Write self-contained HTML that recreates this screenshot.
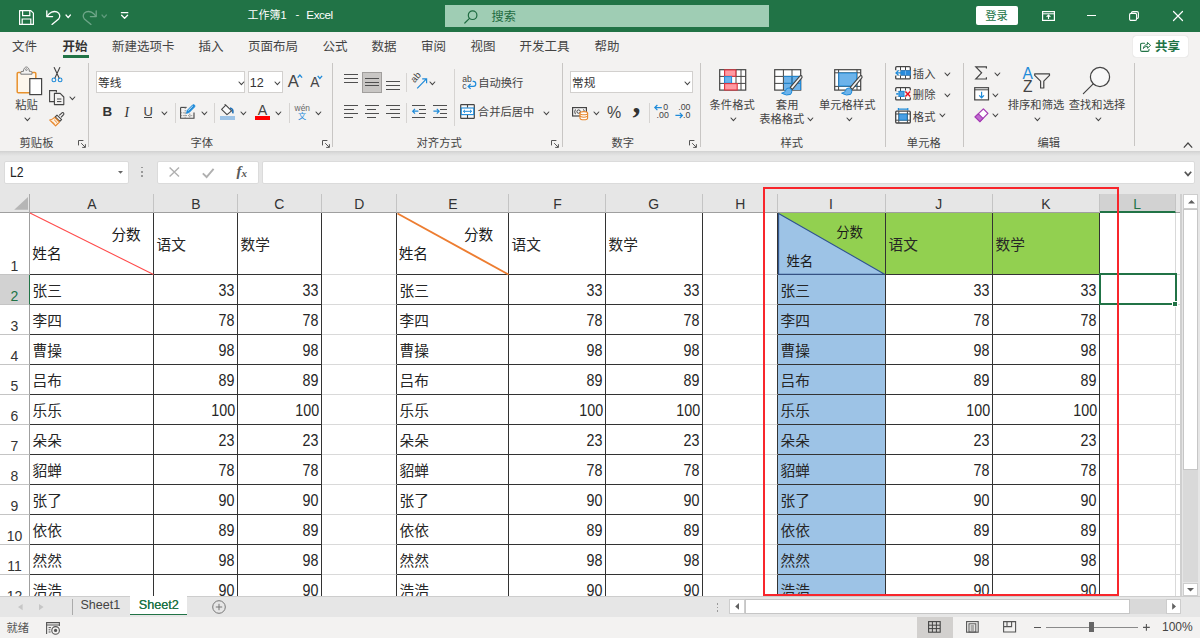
<!DOCTYPE html>
<html lang="zh-CN"><head><meta charset="utf-8"><title>工作簿1 - Excel</title>
<style>
html,body{margin:0;padding:0;background:#e6e6e6;}
#app{position:relative;width:1200px;height:638px;overflow:hidden;background:#e6e6e6;font-family:'Liberation Sans','Noto Sans CJK SC',sans-serif;}
.t{position:absolute;white-space:pre;line-height:1;}
.i{position:absolute;overflow:visible;}
.b{position:absolute;box-sizing:border-box;}
.sec{position:absolute;left:0;width:1200px;}
.cell{position:absolute;box-sizing:border-box;font-size:14.67px;color:#262626;white-space:pre;overflow:hidden;display:flex;align-items:center;}
.num{justify-content:flex-end;font-size:15.7px;}
.n{display:inline-block;transform:scaleX(.91);transform-origin:100% 50%;}
.hdr{position:absolute;box-sizing:border-box;font-size:14.67px;color:#333;text-align:center;}
</style></head>
<body><div id="app">
<div id="titlebar" class="sec" style="top:0;height:32px;background:#217346;"><svg class="i" style="left:19.00px;top:9.50px;" width="15" height="15" viewBox="0 0 15 15"><path d="M0.6 0.6 H11.8 L14.4 3.2 V14.4 H0.6 Z" fill="none" stroke="#fff" stroke-width="1.2" stroke-linejoin="round"/><path d="M3.6 0.8 V5.6 H10.8 V0.8" fill="none" stroke="#fff" stroke-width="1.2"/><path d="M3.2 14.2 V9 H11.8 V14.2" fill="none" stroke="#fff" stroke-width="1.2"/></svg><svg class="i" style="left:45.50px;top:9.50px;" width="15" height="15" viewBox="0 0 15 15"><path d="M0.8 0.8 V6.6 H6.6" fill="none" stroke="#fff" stroke-width="1.3" stroke-linecap="round" stroke-linejoin="round"/><path d="M1.2 6.2 C3.5 2.6 7.5 0.6 10.8 1.9 C14 3.2 14.7 6.6 12.6 9 L6 14.4" fill="none" stroke="#fff" stroke-width="1.3" stroke-linecap="round"/></svg><svg class="i" style="left:65.30px;top:14.20px" width="6.40" height="4.70" viewBox="-1 -1 6.40 4.70"><path d="M0 0 L2.20 2.70 L4.40 0" fill="none" stroke="#fff" stroke-width="1.25" stroke-linecap="round" stroke-linejoin="round"/></svg><svg class="i" style="left:81.50px;top:9.50px;" width="15" height="15" viewBox="0 0 15 15"><path d="M14.2 0.8 V6.6 H8.4" fill="none" stroke="#6fa689" stroke-width="1.3" stroke-linecap="round" stroke-linejoin="round"/><path d="M13.8 6.2 C11.5 2.6 7.5 0.6 4.2 1.9 C1 3.2 0.3 6.6 2.4 9 L9 14.4" fill="none" stroke="#6fa689" stroke-width="1.3" stroke-linecap="round"/></svg><svg class="i" style="left:100.70px;top:14.20px" width="6.40" height="4.70" viewBox="-1 -1 6.40 4.70"><path d="M0 0 L2.20 2.70 L4.40 0" fill="none" stroke="#5d9a7b" stroke-width="1.25" stroke-linecap="round" stroke-linejoin="round"/></svg><svg class="i" style="left:120.50px;top:12.40px;" width="7.2" height="7" viewBox="0 0 7.2 7"><path d="M0.4 0.7 H6.8" stroke="#fff" stroke-width="1.3" stroke-linecap="round"/><path d="M0.6 3.2 L3.6 6.2 L6.6 3.2" fill="none" stroke="#fff" stroke-width="1.3" stroke-linecap="round" stroke-linejoin="round"/></svg><span class="t " style="left:247.56px;top:10.29px;font-size:11px;color:#fff;font-weight:400;">工作簿1</span><span class="t " style="left:295.60px;top:9.47px;font-size:11.5px;color:#fff;font-weight:400;">-</span><span class="t " style="left:306.30px;top:9.30px;font-size:11.7px;color:#fff;font-weight:400;letter-spacing:-0.45px;">Excel</span><div class="b " style="left:445.30px;top:4.80px;width:324.00px;height:22.20px;background:#9fcdb4;"><svg class="i" style="left:18.50px;top:5.00px;" width="14" height="14" viewBox="0 0 14 14"><circle cx="8.6" cy="5.2" r="4.3" fill="none" stroke="#1e6b41" stroke-width="1.2"/><path d="M5.5 8.3 L0.8 13" stroke="#1e6b41" stroke-width="1.2" stroke-linecap="round"/></svg><span class="t " style="left:46.31px;top:5.85px;font-size:12.2px;color:#1e6b41;font-weight:400;">搜索</span></div><div class="b " style="left:975.50px;top:6.30px;width:42.00px;height:18.80px;background:#fff;border-radius:2px;"><span class="t " style="left:9.75px;top:4.35px;font-size:11.3px;color:#217346;font-weight:400;">登录</span></div><svg class="i" style="left:1041.50px;top:11.00px;" width="13" height="10" viewBox="0 0 13 10"><rect x="0.6" y="0.6" width="11.8" height="8.8" fill="none" stroke="#fff" stroke-width="1.2"/><path d="M0.6 2.8 H12.4" stroke="#fff" stroke-width="1"/><path d="M6.5 8 V4.2 M4.6 5.9 L6.5 4 L8.4 5.9" fill="none" stroke="#fff" stroke-width="1.1"/></svg><div class="b " style="left:1087.00px;top:15.00px;width:9.00px;height:1.30px;background:#fff;"></div><svg class="i" style="left:1129.00px;top:11.00px;" width="10" height="10" viewBox="0 0 10 10"><rect x="0.6" y="2.4" width="7" height="7" rx="1.4" fill="none" stroke="#fff" stroke-width="1.1"/><path d="M2.6 2.2 V1.8 Q2.6 0.6 3.8 0.6 H8 Q9.4 0.6 9.4 2 V6.2 Q9.4 7.4 8.2 7.4 H7.8" fill="none" stroke="#fff" stroke-width="1.1"/></svg><svg class="i" style="left:1172.50px;top:11.00px;" width="10" height="10" viewBox="0 0 10 10"><path d="M0.5 0.5 L9.5 9.5 M9.5 0.5 L0.5 9.5" stroke="#fff" stroke-width="1.2" stroke-linecap="round"/></svg></div><div id="tabs" class="sec" style="top:32px;height:28px;background:#f3f2f1;"><span class="t " style="left:12.00px;top:9.02px;font-size:12.5px;color:#444;font-weight:400;">文件</span><span class="t " style="left:62.50px;top:9.02px;font-size:12.5px;color:#333;font-weight:700;">开始</span><div class="b " style="left:63.00px;top:23.00px;width:25.60px;height:3.00px;background:#217346;"></div><span class="t " style="left:112.00px;top:9.02px;font-size:12.5px;color:#444;font-weight:400;">新建选项卡</span><span class="t " style="left:198.50px;top:9.02px;font-size:12.5px;color:#444;font-weight:400;">插入</span><span class="t " style="left:248.00px;top:9.02px;font-size:12.5px;color:#444;font-weight:400;">页面布局</span><span class="t " style="left:322.50px;top:9.02px;font-size:12.5px;color:#444;font-weight:400;">公式</span><span class="t " style="left:371.50px;top:9.02px;font-size:12.5px;color:#444;font-weight:400;">数据</span><span class="t " style="left:421.00px;top:9.02px;font-size:12.5px;color:#444;font-weight:400;">审阅</span><span class="t " style="left:470.50px;top:9.02px;font-size:12.5px;color:#444;font-weight:400;">视图</span><span class="t " style="left:519.50px;top:9.02px;font-size:12.5px;color:#444;font-weight:400;">开发工具</span><span class="t " style="left:594.50px;top:9.02px;font-size:12.5px;color:#444;font-weight:400;">帮助</span><div class="b " style="left:1133.20px;top:3.50px;width:55.00px;height:21.00px;background:#fff;border-radius:3px;box-shadow:0 0 1px rgba(0,0,0,.25);"><svg class="i" style="left:7.00px;top:5.20px;" width="11" height="11" viewBox="0 0 11 11"><path d="M4.6 2.2 H2 Q0.6 2.2 0.6 3.6 V9 Q0.6 10.4 2 10.4 H7.6 Q9 10.4 9 9 V8.2" fill="none" stroke="#217346" stroke-width="1.1" stroke-linecap="round"/><path d="M3.4 7.6 C3.6 5 5.2 3.6 7.4 3.6 V1.4 L10.6 4.4 L7.4 7.2 V5.4 C5.6 5.4 4.4 6 3.4 7.6 Z" fill="none" stroke="#217346" stroke-width="1" stroke-linejoin="round"/></svg><span class="t " style="left:21.80px;top:5.02px;font-size:12.5px;color:#217346;font-weight:700;">共享</span></div></div><div id="ribbon" class="sec" style="top:60px;height:91px;background:#f3f2f1;"><svg class="i" style="left:15.50px;top:6.00px;" width="28" height="30" viewBox="0 0 28 30"><rect x="1.2" y="6.4" width="18.6" height="20.4" rx="1" fill="#fdf6ec" stroke="#e8912d" stroke-width="1.5"/><path d="M4.8 8.2 V6.6 Q4.8 5.4 6 5.4 H7.4 C7.4 2.8 9 1 10.4 1 C11.8 1 13.4 2.8 13.4 5.4 H14.8 Q16 5.4 16 6.6 V8.2 Z" fill="#f3f2f1" stroke="#7a7a7a" stroke-width="1"/><circle cx="10.4" cy="3.6" r="0.9" fill="none" stroke="#7a7a7a" stroke-width="0.8"/><rect x="13.8" y="12.6" width="11.8" height="16" fill="#fff" stroke="#444" stroke-width="1.2"/></svg><span class="t " style="left:15.15px;top:39.95px;font-size:11.3px;color:#444;font-weight:400;">粘贴</span><svg class="i" style="left:24.30px;top:56.70px" width="6.80" height="4.70" viewBox="-1 -1 6.80 4.70"><path d="M0 0 L2.40 2.70 L4.80 0" fill="none" stroke="#444" stroke-width="1.1" stroke-linecap="round" stroke-linejoin="round"/></svg><svg class="i" style="left:50.50px;top:7.00px;" width="12" height="16" viewBox="0 0 12 16"><path d="M3.2 0.6 L8.2 11.2 M8.8 0.6 L3.8 11.2" fill="none" stroke="#444" stroke-width="1.1" stroke-linecap="round"/><circle cx="2.9" cy="12.9" r="1.9" fill="none" stroke="#1f8bd9" stroke-width="1.1"/><circle cx="9.1" cy="12.9" r="1.9" fill="none" stroke="#1f8bd9" stroke-width="1.1"/></svg><svg class="i" style="left:48.80px;top:29.80px;" width="16" height="16" viewBox="0 0 16 16"><path d="M5 11.6 H0.6 V0.6 H7.4 V2.4" fill="none" stroke="#444" stroke-width="1.1"/><path d="M5.4 3.4 H11.2 L14.8 7 V14.6 H5.4 Z" fill="#f3f2f1" stroke="#444" stroke-width="1.1" stroke-linejoin="round"/><path d="M8 9 H12.4 M8 11.6 H12.4" stroke="#444" stroke-width="1"/></svg><svg class="i" style="left:69.30px;top:36.20px" width="6.80" height="4.70" viewBox="-1 -1 6.80 4.70"><path d="M0 0 L2.40 2.70 L4.80 0" fill="none" stroke="#444" stroke-width="1.1" stroke-linecap="round" stroke-linejoin="round"/></svg><svg class="i" style="left:48.80px;top:51.60px;" width="16" height="15" viewBox="0 0 16 15"><path d="M10.2 3.4 L13 0.8 Q13.8 0.2 14.6 1 Q15.2 1.8 14.6 2.6 L12 5.4" fill="none" stroke="#444" stroke-width="1.1"/><path d="M8 3.2 L12.6 7.6 L10.8 9.4 L6.2 5 Z" fill="#f3f2f1" stroke="#444" stroke-width="1.1" stroke-linejoin="round"/><path d="M5.6 5.4 L10.4 10 L6.6 13.8 L0.8 8 Q3.4 7.6 5.6 5.4 Z" fill="#fdf0e0" stroke="#e8872b" stroke-width="1.2" stroke-linejoin="round"/><path d="M3.2 9.8 L5.2 11.8 M5.2 7.8 L8 10.6" stroke="#e8872b" stroke-width="1"/></svg><span class="t " style="left:19.55px;top:78.25px;font-size:11.3px;color:#444;font-weight:400;">剪贴板</span><svg class="i" style="left:77.50px;top:79.50px;" width="8" height="8" viewBox="0 0 8 8"><path d="M0.5 5.4 V0.5 H5.4" fill="none" stroke="#555" stroke-width="1"/><path d="M3.2 3.2 L7.2 7.2 M7.4 4.2 V7.4 H4.2" fill="none" stroke="#555" stroke-width="1"/></svg><div class="b " style="left:88.20px;top:3.00px;width:1.00px;height:83.50px;background:#c8c6c4;"></div><div class="b " style="left:96.30px;top:11.20px;width:149.20px;height:22.30px;background:#fff;border:1px solid #d2d0ce;"><span class="t " style="left:0.73px;top:4.98px;font-size:11.7px;color:#333;font-weight:400;">等线</span></div><svg class="i" style="left:237.60px;top:20.80px" width="6.80" height="4.70" viewBox="-1 -1 6.80 4.70"><path d="M0 0 L2.40 2.70 L4.80 0" fill="none" stroke="#444" stroke-width="1.1" stroke-linecap="round" stroke-linejoin="round"/></svg><div class="b " style="left:247.60px;top:11.20px;width:35.10px;height:22.30px;background:#fff;border:1px solid #d2d0ce;"><span class="t " style="left:1.20px;top:4.93px;font-size:12.6px;color:#333;font-weight:400;">12</span></div><svg class="i" style="left:274.10px;top:20.80px" width="6.80" height="4.70" viewBox="-1 -1 6.80 4.70"><path d="M0 0 L2.40 2.70 L4.80 0" fill="none" stroke="#444" stroke-width="1.1" stroke-linecap="round" stroke-linejoin="round"/></svg><span class="t " style="left:287.80px;top:13.55px;font-size:16.6px;color:#444;font-weight:400;">A</span><svg class="i" style="left:296.60px;top:14.40px;" width="6" height="4.5" viewBox="0 0 6 4.5"><path d="M0.7 3.6 L2.9 1 L5.1 3.6" fill="none" stroke="#1f8bd9" stroke-width="1.3"/></svg><span class="t " style="left:310.30px;top:15.72px;font-size:13.8px;color:#444;font-weight:400;">A</span><svg class="i" style="left:317.40px;top:14.60px;" width="6" height="4.5" viewBox="0 0 6 4.5"><path d="M0.7 0.8 L2.9 3.4 L5.1 0.8" fill="none" stroke="#1f8bd9" stroke-width="1.3"/></svg><span class="t " style="left:102.40px;top:44.66px;font-size:13.4px;color:#333;font-weight:700;">B</span><span class="t " style="left:124.60px;top:45.69px;font-size:13.6px;color:#333;font-weight:400;font-family:'Liberation Serif',serif;font-style:italic;">I</span><span class="t " style="left:143.60px;top:44.60px;font-size:13px;color:#444;font-weight:400;">U</span><div class="b " style="left:143.80px;top:57.00px;width:8.40px;height:1.10px;background:#444;"></div><svg class="i" style="left:161.30px;top:51.10px" width="6.80" height="4.70" viewBox="-1 -1 6.80 4.70"><path d="M0 0 L2.40 2.70 L4.80 0" fill="none" stroke="#444" stroke-width="1.1" stroke-linecap="round" stroke-linejoin="round"/></svg><div class="b " style="left:174.90px;top:43.00px;width:1.00px;height:19.60px;background:#d6d4d2;"></div><svg class="i" style="left:180.40px;top:44.40px;" width="16" height="15" viewBox="0 0 16 15"><path d="M0.6 3.4 V14.2 H14 V8.6" fill="none" stroke="#444" stroke-width="1.1"/><path d="M0.6 3.4 H6.6" stroke="#444" stroke-width="1.1"/><path d="M5.2 3.6 V14 M9.8 9.6 V14 M0.8 8.8 H6.2 M0.8 11.6 H14" stroke="#888" stroke-width="0.9" stroke-dasharray="1.4 1"/><path d="M6.4 9.4 L7.2 6.4 L12.6 0.9 Q13.6 0.2 14.6 1.1 Q15.4 2.1 14.6 3 L9.2 8.5 Z" fill="#1f8bd9" stroke="#1f8bd9" stroke-width="0.8" stroke-linejoin="round"/><path d="M8.2 6.6 L12.8 2" stroke="#cfe6f8" stroke-width="0.9"/></svg><svg class="i" style="left:201.10px;top:51.10px" width="6.80" height="4.70" viewBox="-1 -1 6.80 4.70"><path d="M0 0 L2.40 2.70 L4.80 0" fill="none" stroke="#444" stroke-width="1.1" stroke-linecap="round" stroke-linejoin="round"/></svg><div class="b " style="left:213.90px;top:43.00px;width:1.00px;height:19.60px;background:#d6d4d2;"></div><svg class="i" style="left:220.00px;top:44.00px;" width="16" height="13" viewBox="0 0 16 13"><path d="M5.8 1.2 L11.6 6.8 L7 10.6 L1.6 5.4 Z" fill="#fafafa" stroke="#444" stroke-width="1.1" stroke-linejoin="round"/><path d="M5.8 1.2 L4.6 0.4" stroke="#444" stroke-width="1.1"/><path d="M10 4 Q13.6 4.6 12.8 9.4" fill="none" stroke="#1f6fb5" stroke-width="1.6"/></svg><div class="b " style="left:220.00px;top:56.00px;width:15.00px;height:3.60px;background:#9dc3e6;"></div><svg class="i" style="left:240.10px;top:51.10px" width="6.80" height="4.70" viewBox="-1 -1 6.80 4.70"><path d="M0 0 L2.40 2.70 L4.80 0" fill="none" stroke="#444" stroke-width="1.1" stroke-linecap="round" stroke-linejoin="round"/></svg><span class="t " style="left:257.70px;top:42.78px;font-size:14.2px;color:#444;font-weight:400;">A</span><div class="b " style="left:254.70px;top:56.00px;width:15.70px;height:3.60px;background:#ff0000;"></div><svg class="i" style="left:275.30px;top:51.10px" width="6.80" height="4.70" viewBox="-1 -1 6.80 4.70"><path d="M0 0 L2.40 2.70 L4.80 0" fill="none" stroke="#444" stroke-width="1.1" stroke-linecap="round" stroke-linejoin="round"/></svg><div class="b " style="left:288.50px;top:43.00px;width:1.00px;height:19.60px;background:#d6d4d2;"></div><span class="t " style="left:294.60px;top:44.09px;font-size:8.4px;color:#666;font-weight:400;">wén</span><span class="t " style="left:298.07px;top:52.54px;font-size:8.2px;color:#1f8bd9;font-weight:400;">文</span><svg class="i" style="left:314.80px;top:51.10px" width="6.80" height="4.70" viewBox="-1 -1 6.80 4.70"><path d="M0 0 L2.40 2.70 L4.80 0" fill="none" stroke="#444" stroke-width="1.1" stroke-linecap="round" stroke-linejoin="round"/></svg><span class="t " style="left:190.55px;top:78.25px;font-size:11.3px;color:#444;font-weight:400;">字体</span><svg class="i" style="left:321.80px;top:79.50px;" width="8" height="8" viewBox="0 0 8 8"><path d="M0.5 5.4 V0.5 H5.4" fill="none" stroke="#555" stroke-width="1"/><path d="M3.2 3.2 L7.2 7.2 M7.4 4.2 V7.4 H4.2" fill="none" stroke="#555" stroke-width="1"/></svg><div class="b " style="left:332.10px;top:3.00px;width:1.00px;height:83.50px;background:#c8c6c4;"></div><div class="b " style="left:344.00px;top:14.00px;width:14.00px;height:1.00px;background:#4f4f4f;"></div><div class="b " style="left:344.00px;top:18.00px;width:14.00px;height:1.00px;background:#4f4f4f;"></div><div class="b " style="left:344.00px;top:22.00px;width:14.00px;height:1.00px;background:#4f4f4f;"></div><div class="b " style="left:362.00px;top:12.20px;width:20.00px;height:20.80px;background:#c8c6c4;border:1px solid #a19f9d;"></div><div class="b " style="left:365.00px;top:18.00px;width:14.00px;height:1.00px;background:#4f4f4f;"></div><div class="b " style="left:365.00px;top:22.00px;width:14.00px;height:1.00px;background:#4f4f4f;"></div><div class="b " style="left:365.00px;top:25.00px;width:14.00px;height:1.00px;background:#4f4f4f;"></div><div class="b " style="left:386.00px;top:21.00px;width:14.00px;height:1.00px;background:#4f4f4f;"></div><div class="b " style="left:386.00px;top:25.00px;width:14.00px;height:1.00px;background:#4f4f4f;"></div><div class="b " style="left:386.00px;top:29.00px;width:14.00px;height:1.00px;background:#4f4f4f;"></div><div class="b " style="left:405.50px;top:13.40px;width:1.00px;height:18.60px;background:#d6d4d2;"></div><svg class="i" style="left:410.50px;top:13.50px;" width="17" height="15" viewBox="0 0 17 15"><text x="0" y="0" transform="translate(3.4,9.2) rotate(-48)" font-size="9.4" fill="#444" font-family="Liberation Sans,sans-serif">ab</text><path d="M6.2 14.4 L15.2 5.2 M11.2 4.8 H15.6 V9.2" fill="none" stroke="#1f8bd9" stroke-width="1.2"/></svg><svg class="i" style="left:429.30px;top:20.80px" width="6.80" height="4.70" viewBox="-1 -1 6.80 4.70"><path d="M0 0 L2.40 2.70 L4.80 0" fill="none" stroke="#444" stroke-width="1.1" stroke-linecap="round" stroke-linejoin="round"/></svg><div class="b " style="left:453.50px;top:9.00px;width:1.00px;height:56.60px;background:#d6d4d2;"></div><svg class="i" style="left:462.40px;top:15.00px;" width="14.5" height="14.5" viewBox="0 0 14.5 14.5"><text x="0.2" y="6.6" font-size="8.6" fill="#444" font-family="Liberation Sans,sans-serif">ab</text><text x="0.2" y="13.6" font-size="8.6" fill="#444" font-family="Liberation Sans,sans-serif">c</text><path d="M10.6 6.4 H11.4 Q13.8 6.4 13.8 9 Q13.8 11.4 11.4 11.4 H6.4 M8.6 9 L6.2 11.4 L8.6 13.8" fill="none" stroke="#1f8bd9" stroke-width="1.2"/></svg><span class="t " style="left:478.15px;top:18.25px;font-size:11.3px;color:#444;font-weight:400;">自动换行</span><div class="b " style="left:344.00px;top:45.00px;width:14.00px;height:1.00px;background:#4f4f4f;"></div><div class="b " style="left:344.00px;top:49.00px;width:10.00px;height:1.00px;background:#4f4f4f;"></div><div class="b " style="left:344.00px;top:53.00px;width:14.00px;height:1.00px;background:#4f4f4f;"></div><div class="b " style="left:344.00px;top:57.00px;width:9.00px;height:1.00px;background:#4f4f4f;"></div><div class="b " style="left:365.00px;top:45.00px;width:14.00px;height:1.00px;background:#4f4f4f;"></div><div class="b " style="left:367.00px;top:49.00px;width:9.00px;height:1.00px;background:#4f4f4f;"></div><div class="b " style="left:365.00px;top:53.00px;width:14.00px;height:1.00px;background:#4f4f4f;"></div><div class="b " style="left:367.00px;top:57.00px;width:9.00px;height:1.00px;background:#4f4f4f;"></div><div class="b " style="left:386.00px;top:45.00px;width:14.00px;height:1.00px;background:#4f4f4f;"></div><div class="b " style="left:390.00px;top:49.00px;width:10.00px;height:1.00px;background:#4f4f4f;"></div><div class="b " style="left:386.00px;top:53.00px;width:14.00px;height:1.00px;background:#4f4f4f;"></div><div class="b " style="left:391.00px;top:57.00px;width:9.00px;height:1.00px;background:#4f4f4f;"></div><div class="b " style="left:405.50px;top:43.00px;width:1.00px;height:19.60px;background:#d6d4d2;"></div><div class="b " style="left:412.00px;top:45.00px;width:13.00px;height:1.00px;background:#4f4f4f;"></div><div class="b " style="left:412.00px;top:57.00px;width:13.00px;height:1.00px;background:#4f4f4f;"></div><div class="b " style="left:419.00px;top:49.00px;width:7.00px;height:1.00px;background:#4f4f4f;"></div><div class="b " style="left:419.00px;top:53.00px;width:7.00px;height:1.00px;background:#4f4f4f;"></div><svg class="i" style="left:411.60px;top:48.40px;" width="7" height="6.6" viewBox="0 0 7 6.6"><path d="M6.4 3.2 H0.8 M3 0.8 L0.7 3.2 L3 5.6" fill="none" stroke="#1f8bd9" stroke-width="1.2"/></svg><div class="b " style="left:433.00px;top:45.00px;width:14.00px;height:1.00px;background:#4f4f4f;"></div><div class="b " style="left:433.00px;top:57.00px;width:14.00px;height:1.00px;background:#4f4f4f;"></div><div class="b " style="left:440.00px;top:49.00px;width:7.00px;height:1.00px;background:#4f4f4f;"></div><div class="b " style="left:440.00px;top:53.00px;width:7.00px;height:1.00px;background:#4f4f4f;"></div><svg class="i" style="left:433.00px;top:48.40px;" width="7" height="6.6" viewBox="0 0 7 6.6"><path d="M0.4 3.2 H6 M3.8 0.8 L6.1 3.2 L3.8 5.6" fill="none" stroke="#1f8bd9" stroke-width="1.2"/></svg><svg class="i" style="left:460.20px;top:44.20px;" width="15" height="15" viewBox="0 0 15 15"><rect x="0.7" y="0.7" width="13.6" height="13.6" rx="0.6" fill="#fafafa" stroke="#444" stroke-width="1.2"/><rect x="1.3" y="4" width="12.4" height="6.6" fill="#fff" stroke="#1f8bd9" stroke-width="1.1"/><path d="M7.5 1 V3.6 M7.5 11 V14" stroke="#444" stroke-width="1.1"/><path d="M3.4 7.3 H11.6 M5 5.8 L3.4 7.3 L5 8.8 M10 5.8 L11.6 7.3 L10 8.8" fill="none" stroke="#1f8bd9" stroke-width="1"/></svg><span class="t " style="left:477.85px;top:47.45px;font-size:11.3px;color:#444;font-weight:400;">合并后居中</span><svg class="i" style="left:542.90px;top:51.10px" width="6.80" height="4.70" viewBox="-1 -1 6.80 4.70"><path d="M0 0 L2.40 2.70 L4.80 0" fill="none" stroke="#444" stroke-width="1.1" stroke-linecap="round" stroke-linejoin="round"/></svg><span class="t " style="left:416.55px;top:78.25px;font-size:11.3px;color:#444;font-weight:400;">对齐方式</span><svg class="i" style="left:551.30px;top:79.50px;" width="8" height="8" viewBox="0 0 8 8"><path d="M0.5 5.4 V0.5 H5.4" fill="none" stroke="#555" stroke-width="1"/><path d="M3.2 3.2 L7.2 7.2 M7.4 4.2 V7.4 H4.2" fill="none" stroke="#555" stroke-width="1"/></svg><div class="b " style="left:562.00px;top:3.00px;width:1.00px;height:83.50px;background:#c8c6c4;"></div><div class="b " style="left:570.40px;top:11.20px;width:122.60px;height:22.30px;background:#fff;border:1px solid #d2d0ce;"><span class="t " style="left:0.73px;top:4.98px;font-size:11.7px;color:#333;font-weight:400;">常规</span></div><svg class="i" style="left:684.10px;top:20.80px" width="6.80" height="4.70" viewBox="-1 -1 6.80 4.70"><path d="M0 0 L2.40 2.70 L4.80 0" fill="none" stroke="#444" stroke-width="1.1" stroke-linecap="round" stroke-linejoin="round"/></svg><svg class="i" style="left:571.80px;top:46.80px;" width="17" height="13.4" viewBox="0 0 17 13.4"><rect x="0.6" y="0.6" width="13.8" height="8.4" fill="#f6f6f6" stroke="#444" stroke-width="1.2"/><path d="M3.4 2.4 Q2 4.8 3.4 7.2 M11.4 2.4 Q12 3 12.2 4" fill="none" stroke="#444" stroke-width="1"/><circle cx="6.6" cy="4.6" r="1.7" fill="none" stroke="#444" stroke-width="1"/><path d="M8 6.4 V11 Q8 12.8 11.8 12.8 Q15.6 12.8 15.6 11 V6.4 Z" fill="#fff" stroke="#e8872b" stroke-width="1.1"/><ellipse cx="11.8" cy="6.2" rx="3.8" ry="1.6" fill="#fff" stroke="#e8872b" stroke-width="1.1"/><path d="M8 8.6 Q8 10.2 11.8 10.2 Q15.6 10.2 15.6 8.6" fill="none" stroke="#e8872b" stroke-width="1.1"/></svg><svg class="i" style="left:593.10px;top:51.10px" width="6.80" height="4.70" viewBox="-1 -1 6.80 4.70"><path d="M0 0 L2.40 2.70 L4.80 0" fill="none" stroke="#444" stroke-width="1.1" stroke-linecap="round" stroke-linejoin="round"/></svg><span class="t " style="left:607.40px;top:44.47px;font-size:17.4px;color:#444;font-weight:400;transform:scaleX(.92);transform-origin:0 0;">%</span><span class="t " style="left:632.60px;top:25.51px;font-size:32px;color:#333;font-weight:700;font-family:'Liberation Serif',serif;">,</span><div class="b " style="left:648.50px;top:43.00px;width:1.00px;height:19.60px;background:#d6d4d2;"></div><svg class="i" style="left:654.40px;top:44.40px;" width="15" height="15" viewBox="0 0 15 15"><text x="9.2" y="6.4" font-size="8.8" fill="#444" font-family="Liberation Sans,sans-serif">0</text><text x="2.6" y="14.4" font-size="8.8" fill="#444" font-family="Liberation Sans,sans-serif">.00</text><path d="M7.8 3.6 H1 M3.4 1 L0.8 3.6 L3.4 6.2" fill="none" stroke="#1f8bd9" stroke-width="1.2"/></svg><svg class="i" style="left:675.30px;top:44.40px;" width="15" height="15" viewBox="0 0 15 15"><text x="3.2" y="6.4" font-size="8.8" fill="#444" font-family="Liberation Sans,sans-serif">.00</text><text x="8" y="14.4" font-size="8.8" fill="#444" font-family="Liberation Sans,sans-serif">.0</text><path d="M0.4 11.4 H7.2 M4.8 8.8 L7.4 11.4 L4.8 14" fill="none" stroke="#1f8bd9" stroke-width="1.2"/></svg><span class="t " style="left:611.55px;top:78.25px;font-size:11.3px;color:#444;font-weight:400;">数字</span><svg class="i" style="left:689.00px;top:79.50px;" width="8" height="8" viewBox="0 0 8 8"><path d="M0.5 5.4 V0.5 H5.4" fill="none" stroke="#555" stroke-width="1"/><path d="M3.2 3.2 L7.2 7.2 M7.4 4.2 V7.4 H4.2" fill="none" stroke="#555" stroke-width="1"/></svg><div class="b " style="left:700.20px;top:3.00px;width:1.00px;height:83.50px;background:#c8c6c4;"></div><svg class="i" style="left:719.00px;top:9.40px;" width="28" height="22" viewBox="0 0 28 22"><rect x="0.7" y="0.7" width="26" height="20.4" fill="#fff" stroke="#444" stroke-width="1.2"/><path d="M5.6 0.8 V21 M17 0.8 V21 M22 0.8 V21 M0.8 7.4 H26.6 M0.8 14.4 H26.6" stroke="#444" stroke-width="1"/><rect x="5.6" y="0.9" width="11.2" height="6.4" fill="#ff9aa2" stroke="#e0343f" stroke-width="1.1"/><rect x="5.6" y="7.6" width="7" height="6.6" fill="#6db3ea" stroke="#1f8bd9" stroke-width="1"/><rect x="5.6" y="14.6" width="12.6" height="6.4" fill="#ff9aa2" stroke="#e0343f" stroke-width="1.1"/></svg><span class="t " style="left:709.55px;top:39.85px;font-size:11.3px;color:#444;font-weight:400;">条件格式</span><svg class="i" style="left:730.30px;top:56.70px" width="6.80" height="4.70" viewBox="-1 -1 6.80 4.70"><path d="M0 0 L2.40 2.70 L4.80 0" fill="none" stroke="#444" stroke-width="1.1" stroke-linecap="round" stroke-linejoin="round"/></svg><svg class="i" style="left:773.60px;top:9.40px;" width="31" height="27" viewBox="0 0 31 27"><rect x="0.7" y="0.7" width="26" height="20.4" fill="#fff" stroke="#444" stroke-width="1.2"/><rect x="9.4" y="7.4" width="17.2" height="13.6" fill="#6db3ea"/><path d="M9.4 0.8 V21 M18 0.8 V21 M0.8 7.4 H26.6 M0.8 14.4 H26.6" stroke="#444" stroke-width="1"/><path d="M9.4 7.4 H26.6 V21 M18 7.4 V21 M9.4 14.4 H26.6" fill="none" stroke="#1f8bd9" stroke-width="1"/><path d="M7.6 24.2 q4.2 -0.4 5 -4.6 q2.6 -1.6 4.6 0.6 q1.6 2.8 -0.6 5.2 q-3.8 1.8 -9 -1.2 Z" fill="#6db3ea" stroke="#1f8bd9" stroke-width="1"/><path d="M16.2 18.4 l9.6 -11.2 q1.2 -1 2 -0.2 q0.8 1 -0.2 2.2 l-9.2 11.2 Z" fill="#f3f2f1" stroke="#444" stroke-width="1.1" stroke-linejoin="round"/></svg><span class="t " style="left:775.85px;top:39.85px;font-size:11.3px;color:#444;font-weight:400;">套用</span><span class="t " style="left:759.15px;top:54.15px;font-size:11.3px;color:#444;font-weight:400;">表格格式</span><svg class="i" style="left:807.30px;top:57.00px" width="6.80" height="4.70" viewBox="-1 -1 6.80 4.70"><path d="M0 0 L2.40 2.70 L4.80 0" fill="none" stroke="#444" stroke-width="1.1" stroke-linecap="round" stroke-linejoin="round"/></svg><svg class="i" style="left:834.00px;top:9.40px;" width="31" height="27" viewBox="0 0 31 27"><rect x="0.7" y="0.7" width="26" height="20.4" fill="#fff" stroke="#444" stroke-width="1.2"/><path d="M4.6 0.8 V21 M23 0.8 V21 M0.8 3.8 H26.6 M0.8 17.4 H26.6" stroke="#444" stroke-width="1"/><rect x="4.8" y="4" width="17.8" height="13" fill="#6db3ea" stroke="#1f8bd9" stroke-width="1"/><path d="M7.6 24.2 q4.2 -0.4 5 -4.6 q2.6 -1.6 4.6 0.6 q1.6 2.8 -0.6 5.2 q-3.8 1.8 -9 -1.2 Z" fill="#6db3ea" stroke="#1f8bd9" stroke-width="1"/><path d="M16.2 18.4 l9.6 -11.2 q1.2 -1 2 -0.2 q0.8 1 -0.2 2.2 l-9.2 11.2 Z" fill="#f3f2f1" stroke="#444" stroke-width="1.1" stroke-linejoin="round"/></svg><span class="t " style="left:818.95px;top:39.85px;font-size:11.3px;color:#444;font-weight:400;">单元格样式</span><svg class="i" style="left:845.50px;top:56.70px" width="6.80" height="4.70" viewBox="-1 -1 6.80 4.70"><path d="M0 0 L2.40 2.70 L4.80 0" fill="none" stroke="#444" stroke-width="1.1" stroke-linecap="round" stroke-linejoin="round"/></svg><span class="t " style="left:780.55px;top:78.25px;font-size:11.3px;color:#444;font-weight:400;">样式</span><div class="b " style="left:884.90px;top:3.00px;width:1.00px;height:83.50px;background:#c8c6c4;"></div><svg class="i" style="left:895.10px;top:6.00px;" width="16" height="14" viewBox="0 0 16 14"><rect x="0.7" y="0.7" width="14.6" height="12.2" rx="1" fill="#fff" stroke="#444" stroke-width="1.3"/><path d="M5.5 1 V12.6 M10.5 1 V12.6 M1 4.7 H15 M1 9.1 H15" stroke="#444" stroke-width="1"/><rect x="-0.4" y="4.2" width="6" height="5.4" fill="#f3f2f1"/><rect x="5.6" y="4.3" width="10.2" height="5.2" fill="#2b8ada"/><path d="M10.5 4.6 V9.2" stroke="#7fbdf0" stroke-width="0.8"/><path d="M8 6.9 H1 M3.6 4.4 L1 6.9 L3.6 9.4" fill="none" stroke="#1f8bd9" stroke-width="1.3"/></svg><span class="t " style="left:912.85px;top:9.15px;font-size:11.3px;color:#444;font-weight:400;">插入</span><svg class="i" style="left:944.20px;top:11.60px" width="6.80" height="4.70" viewBox="-1 -1 6.80 4.70"><path d="M0 0 L2.40 2.70 L4.80 0" fill="none" stroke="#444" stroke-width="1.1" stroke-linecap="round" stroke-linejoin="round"/></svg><svg class="i" style="left:895.10px;top:27.30px;" width="16" height="14" viewBox="0 0 16 14"><rect x="0.7" y="0.7" width="14.6" height="12.2" rx="1" fill="#fff" stroke="#444" stroke-width="1.3"/><path d="M5.5 1 V12.6 M10.5 1 V12.6 M1 4.7 H15 M1 9.1 H15" stroke="#444" stroke-width="1"/><rect x="-0.4" y="4.2" width="4" height="5.4" fill="#f3f2f1"/><rect x="9.4" y="3.4" width="7" height="7" fill="#f3f2f1"/><rect x="4" y="4.3" width="5" height="5.2" fill="#4a9fe4" stroke="#1f8bd9" stroke-width="1"/><path d="M1.2 6.9 H3.6" stroke="#1f8bd9" stroke-width="1.6"/><path d="M10.4 4.4 L15.2 9.4 M15.2 4.4 L10.4 9.4" stroke="#e81123" stroke-width="1.4"/></svg><span class="t " style="left:912.85px;top:30.45px;font-size:11.3px;color:#444;font-weight:400;">删除</span><svg class="i" style="left:944.20px;top:32.60px" width="6.80" height="4.70" viewBox="-1 -1 6.80 4.70"><path d="M0 0 L2.40 2.70 L4.80 0" fill="none" stroke="#444" stroke-width="1.1" stroke-linecap="round" stroke-linejoin="round"/></svg><svg class="i" style="left:895.10px;top:47.60px;" width="16" height="16" viewBox="0 0 16 16"><path d="M3.4 1.2 H12.8 M3.4 0 V2.4 M12.8 0 V2.4" stroke="#1f8bd9" stroke-width="1.2"/><rect x="0.7" y="3.2" width="14.6" height="11.8" rx="1" fill="#fff" stroke="#444" stroke-width="1.3"/><path d="M3.8 3.4 V14.8 M12.4 3.4 V14.8 M1 6 H15 M1 12.2 H15" stroke="#444" stroke-width="1"/><rect x="4.2" y="6.2" width="7.8" height="5.8" fill="#4a9fe4" stroke="#1f8bd9" stroke-width="1"/></svg><span class="t " style="left:912.85px;top:51.55px;font-size:11.3px;color:#444;font-weight:400;">格式</span><svg class="i" style="left:938.60px;top:53.40px" width="6.80" height="4.70" viewBox="-1 -1 6.80 4.70"><path d="M0 0 L2.40 2.70 L4.80 0" fill="none" stroke="#444" stroke-width="1.1" stroke-linecap="round" stroke-linejoin="round"/></svg><span class="t " style="left:906.85px;top:78.25px;font-size:11.3px;color:#444;font-weight:400;">单元格</span><div class="b " style="left:963.00px;top:3.00px;width:1.00px;height:83.50px;background:#c8c6c4;"></div><svg class="i" style="left:975.30px;top:5.80px;" width="13" height="14" viewBox="0 0 13 14"><path d="M11.4 2.6 V0.8 H0.8 L6.6 6.8 L0.8 13 H11.4 V11.2" fill="none" stroke="#444" stroke-width="1.2" stroke-linejoin="miter"/></svg><svg class="i" style="left:994.10px;top:11.60px" width="6.80" height="4.70" viewBox="-1 -1 6.80 4.70"><path d="M0 0 L2.40 2.70 L4.80 0" fill="none" stroke="#444" stroke-width="1.1" stroke-linecap="round" stroke-linejoin="round"/></svg><svg class="i" style="left:973.50px;top:27.10px;" width="15.4" height="13.8" viewBox="0 0 15.4 13.8"><rect x="0.7" y="0.7" width="13.8" height="12.2" fill="#fff" stroke="#444" stroke-width="1.2"/><path d="M0.8 2.8 H14.4" stroke="#444" stroke-width="1"/><path d="M7.6 4.8 V10.6 M5.2 8.4 L7.6 10.8 L10 8.4" fill="none" stroke="#1f8bd9" stroke-width="1.2"/></svg><svg class="i" style="left:991.90px;top:32.60px" width="6.80" height="4.70" viewBox="-1 -1 6.80 4.70"><path d="M0 0 L2.40 2.70 L4.80 0" fill="none" stroke="#444" stroke-width="1.1" stroke-linecap="round" stroke-linejoin="round"/></svg><svg class="i" style="left:973.60px;top:47.60px;" width="15" height="15" viewBox="0 0 15 15"><path d="M9.4 0.9 L13.9 5.4 L5.9 13.6 L1.1 8.9 Z" fill="#fff" stroke="#a53bb4" stroke-width="1.3" stroke-linejoin="round"/><path d="M4.4 5.8 L9 10.4 L5.9 13.6 L1.1 8.9 Z" fill="#c06bd0" stroke="#a53bb4" stroke-width="1.1" stroke-linejoin="round"/></svg><svg class="i" style="left:991.90px;top:53.40px" width="6.80" height="4.70" viewBox="-1 -1 6.80 4.70"><path d="M0 0 L2.40 2.70 L4.80 0" fill="none" stroke="#444" stroke-width="1.1" stroke-linecap="round" stroke-linejoin="round"/></svg><span class="t " style="left:1022.60px;top:6.19px;font-size:15.6px;color:#1f8bd9;font-weight:400;">A</span><span class="t " style="left:1023.00px;top:19.39px;font-size:15.6px;color:#444;font-weight:400;">Z</span><svg class="i" style="left:1034.00px;top:12.60px;" width="16.4" height="16.4" viewBox="0 0 16.4 16.4"><path d="M0.7 0.8 H15.5 V2.4 L9.8 8.2 V15 H6.6 V8.2 L0.7 2.4 Z" fill="none" stroke="#444" stroke-width="1.2" stroke-linejoin="round"/></svg><span class="t " style="left:1007.75px;top:39.85px;font-size:11.3px;color:#444;font-weight:400;">排序和筛选</span><svg class="i" style="left:1034.30px;top:56.70px" width="6.80" height="4.70" viewBox="-1 -1 6.80 4.70"><path d="M0 0 L2.40 2.70 L4.80 0" fill="none" stroke="#444" stroke-width="1.1" stroke-linecap="round" stroke-linejoin="round"/></svg><svg class="i" style="left:1082.00px;top:6.00px;" width="30" height="30" viewBox="0 0 30 30"><circle cx="18" cy="11" r="9.6" fill="#f8f8f8" stroke="#444" stroke-width="1.2"/><path d="M11.2 17.8 L1.4 27.6" stroke="#444" stroke-width="1.2" stroke-linecap="round"/></svg><span class="t " style="left:1068.75px;top:39.85px;font-size:11.3px;color:#444;font-weight:400;">查找和选择</span><svg class="i" style="left:1094.70px;top:56.70px" width="6.80" height="4.70" viewBox="-1 -1 6.80 4.70"><path d="M0 0 L2.40 2.70 L4.80 0" fill="none" stroke="#444" stroke-width="1.1" stroke-linecap="round" stroke-linejoin="round"/></svg><span class="t " style="left:1037.55px;top:78.25px;font-size:11.3px;color:#444;font-weight:400;">编辑</span><div class="b " style="left:1134.10px;top:3.30px;width:1.00px;height:83.20px;background:#c8c6c4;"></div><svg class="i" style="left:1182.60px;top:81.60px;" width="10" height="6.6" viewBox="0 0 10 6.6"><path d="M0.8 5.6 L5 1 L9.2 5.6" fill="none" stroke="#444" stroke-width="1.2"/></svg></div><div class="sec" style="top:151px;height:5px;background:linear-gradient(#d0d0d0,#dbdbdb 40%,#e6e6e6);"></div><div id="formulabar" class="sec" style="top:156px;height:38px;background:#e6e6e6;"><div class="b " style="left:4.40px;top:5.00px;width:124.20px;height:22.50px;background:#fff;border:1px solid #dbdbdb;border-radius:2px;"><span class="t " style="left:4.40px;top:4.43px;font-size:13.9px;color:#222;font-weight:400;transform:scaleX(.88);transform-origin:0 50%;">L2</span><svg class="i" style="left:112.40px;top:8.80px;" width="5" height="3" viewBox="0 0 5 3"><path d="M0 0 H5 L2.5 2.8 Z" fill="#666"/></svg></div><div class="b " style="left:141.30px;top:10.70px;width:1.50px;height:1.50px;background:#9a9a9a;"></div><div class="b " style="left:141.30px;top:15.10px;width:1.50px;height:1.50px;background:#9a9a9a;"></div><div class="b " style="left:141.30px;top:19.20px;width:1.50px;height:1.50px;background:#9a9a9a;"></div><div class="b " style="left:157.00px;top:5.00px;width:102.00px;height:22.50px;background:#fff;border:1px solid #dbdbdb;border-radius:2px;"><svg class="i" style="left:10.60px;top:5.20px;" width="11" height="10" viewBox="0 0 11 10"><path d="M0.6 0.6 L10 9.6 M10 0.6 L0.6 9.6" stroke="#b0b0b0" stroke-width="1.4"/></svg><svg class="i" style="left:44.00px;top:5.60px;" width="13" height="10" viewBox="0 0 13 10"><path d="M0.8 5.4 L4.6 9 L11.6 0.8" fill="none" stroke="#b0b0b0" stroke-width="1.9"/></svg><span class="t " style="left:78.40px;top:2.10px;font-size:15px;color:#5a5a5a;font-weight:700;font-family:'Liberation Serif',serif;font-style:italic;">f</span><span class="t " style="left:83.60px;top:6.09px;font-size:11px;color:#5a5a5a;font-weight:700;font-family:'Liberation Serif',serif;font-style:italic;">x</span></div><div class="b " style="left:262.00px;top:5.00px;width:933.40px;height:22.50px;background:#fff;border:1px solid #dbdbdb;border-radius:2px;"><svg class="i" style="left:920.60px;top:9.00px;" width="8" height="6" viewBox="0 0 8 6"><path d="M0.8 0.8 L4 4.4 L7.2 0.8" fill="none" stroke="#555" stroke-width="1.7"/></svg></div></div><div id="grid" class="sec" style="top:194px;height:402px;background:#fff;width:1182px;overflow:hidden;"><div class="b " style="left:0.00px;top:0.00px;width:1180.00px;height:19.00px;background:#e6e6e6;"></div><svg class="i" style="left:13.50px;top:3.00px;" width="14" height="13" viewBox="0 0 14 13"><path d="M14 0 V12.8 H0.2 Z" fill="#b6b6b6"/></svg><div class="hdr" style="left:30px;top:0;width:124px;height:19px;border-right:1px solid #c4c4c4;line-height:20px;border-bottom:1px solid #9f9f9f;"><span style="display:inline-block;transform:scaleX(.95);">A</span></div><div class="hdr" style="left:154px;top:0;width:84px;height:19px;border-right:1px solid #c4c4c4;line-height:20px;border-bottom:1px solid #9f9f9f;"><span style="display:inline-block;transform:scaleX(.95);">B</span></div><div class="hdr" style="left:238px;top:0;width:84px;height:19px;border-right:1px solid #c4c4c4;line-height:20px;border-bottom:1px solid #9f9f9f;"><span style="display:inline-block;transform:scaleX(.95);">C</span></div><div class="hdr" style="left:322px;top:0;width:75px;height:19px;border-right:1px solid #c4c4c4;line-height:20px;border-bottom:1px solid #9f9f9f;"><span style="display:inline-block;transform:scaleX(.95);">D</span></div><div class="hdr" style="left:397px;top:0;width:112px;height:19px;border-right:1px solid #c4c4c4;line-height:20px;border-bottom:1px solid #9f9f9f;"><span style="display:inline-block;transform:scaleX(.95);">E</span></div><div class="hdr" style="left:509px;top:0;width:97px;height:19px;border-right:1px solid #c4c4c4;line-height:20px;border-bottom:1px solid #9f9f9f;"><span style="display:inline-block;transform:scaleX(.95);">F</span></div><div class="hdr" style="left:606px;top:0;width:97px;height:19px;border-right:1px solid #c4c4c4;line-height:20px;border-bottom:1px solid #9f9f9f;"><span style="display:inline-block;transform:scaleX(.95);">G</span></div><div class="hdr" style="left:703px;top:0;width:75px;height:19px;border-right:1px solid #c4c4c4;line-height:20px;border-bottom:1px solid #9f9f9f;"><span style="display:inline-block;transform:scaleX(.95);">H</span></div><div class="hdr" style="left:778px;top:0;width:108px;height:19px;border-right:1px solid #c4c4c4;line-height:20px;border-bottom:1px solid #9f9f9f;"><span style="display:inline-block;transform:scaleX(.95);">I</span></div><div class="hdr" style="left:886px;top:0;width:107px;height:19px;border-right:1px solid #c4c4c4;line-height:20px;border-bottom:1px solid #9f9f9f;"><span style="display:inline-block;transform:scaleX(.95);">J</span></div><div class="hdr" style="left:993px;top:0;width:107px;height:19px;border-right:1px solid #c4c4c4;line-height:20px;border-bottom:1px solid #9f9f9f;"><span style="display:inline-block;transform:scaleX(.95);">K</span></div><div class="hdr" style="left:1100px;top:0;width:76px;height:19px;border-right:1px solid #c4c4c4;line-height:20px;background:#d2d2d2;color:#217346;border-bottom:2px solid #217346;"><span style="display:inline-block;transform:scaleX(.95);">L</span></div><div class="hdr" style="left:1176px;top:0;width:4px;height:19px;border-bottom:1px solid #9f9f9f;"></div><div class="b " style="left:0.00px;top:18.00px;width:30.00px;height:1.00px;background:#9f9f9f;"></div><div class="b " style="left:29.00px;top:0.00px;width:1.00px;height:19.00px;background:#ababab;"></div><div class="hdr" style="left:0;top:19px;width:30px;height:62px;border-bottom:1px solid #c4c4c4;border-right:1px solid #9f9f9f;"><span style="position:absolute;left:0;width:29px;bottom:-0.5px;line-height:17px;text-align:center;font-size:14px;">1</span></div><div class="hdr" style="left:0;top:81px;width:30px;height:30px;border-bottom:1px solid #c4c4c4;background:#d2d2d2;color:#217346;border-right:1px solid #217346;"><span style="position:absolute;left:0;width:29px;bottom:-0.5px;line-height:17px;text-align:center;font-size:14px;">2</span></div><div class="hdr" style="left:0;top:111px;width:30px;height:30px;border-bottom:1px solid #c4c4c4;border-right:1px solid #9f9f9f;"><span style="position:absolute;left:0;width:29px;bottom:-0.5px;line-height:17px;text-align:center;font-size:14px;">3</span></div><div class="hdr" style="left:0;top:141px;width:30px;height:30px;border-bottom:1px solid #c4c4c4;border-right:1px solid #9f9f9f;"><span style="position:absolute;left:0;width:29px;bottom:-0.5px;line-height:17px;text-align:center;font-size:14px;">4</span></div><div class="hdr" style="left:0;top:171px;width:30px;height:30px;border-bottom:1px solid #c4c4c4;border-right:1px solid #9f9f9f;"><span style="position:absolute;left:0;width:29px;bottom:-0.5px;line-height:17px;text-align:center;font-size:14px;">5</span></div><div class="hdr" style="left:0;top:201px;width:30px;height:30px;border-bottom:1px solid #c4c4c4;border-right:1px solid #9f9f9f;"><span style="position:absolute;left:0;width:29px;bottom:-0.5px;line-height:17px;text-align:center;font-size:14px;">6</span></div><div class="hdr" style="left:0;top:231px;width:30px;height:30px;border-bottom:1px solid #c4c4c4;border-right:1px solid #9f9f9f;"><span style="position:absolute;left:0;width:29px;bottom:-0.5px;line-height:17px;text-align:center;font-size:14px;">7</span></div><div class="hdr" style="left:0;top:261px;width:30px;height:30px;border-bottom:1px solid #c4c4c4;border-right:1px solid #9f9f9f;"><span style="position:absolute;left:0;width:29px;bottom:-0.5px;line-height:17px;text-align:center;font-size:14px;">8</span></div><div class="hdr" style="left:0;top:291px;width:30px;height:30px;border-bottom:1px solid #c4c4c4;border-right:1px solid #9f9f9f;"><span style="position:absolute;left:0;width:29px;bottom:-0.5px;line-height:17px;text-align:center;font-size:14px;">9</span></div><div class="hdr" style="left:0;top:321px;width:30px;height:30px;border-bottom:1px solid #c4c4c4;border-right:1px solid #9f9f9f;"><span style="position:absolute;left:0;width:29px;bottom:-0.5px;line-height:17px;text-align:center;font-size:14px;">10</span></div><div class="hdr" style="left:0;top:351px;width:30px;height:30px;border-bottom:1px solid #c4c4c4;border-right:1px solid #9f9f9f;"><span style="position:absolute;left:0;width:29px;bottom:-0.5px;line-height:17px;text-align:center;font-size:14px;">11</span></div><div class="hdr" style="left:0;top:381px;width:30px;height:30px;border-bottom:1px solid #c4c4c4;border-right:1px solid #9f9f9f;"><span style="position:absolute;left:0;width:29px;bottom:-0.5px;line-height:17px;text-align:center;font-size:14px;">12</span></div><div class="cell" style="left:30px;top:19px;width:124px;height:62px;background:#fff;border-right:1px solid #333;border-bottom:1px solid #333;padding:0 0 1px 2.6px;"></div><div class="cell" style="left:154px;top:19px;width:84px;height:62px;background:#fff;border-right:1px solid #333;border-bottom:1px solid #333;padding:0 0 1px 2.6px;">语文</div><div class="cell" style="left:238px;top:19px;width:84px;height:62px;background:#fff;border-right:1px solid #333;border-bottom:1px solid #333;padding:0 0 1px 2.6px;">数学</div><div class="cell" style="left:322px;top:19px;width:75px;height:62px;background:#fff;border-right:1px solid #333;border-bottom:1px solid #d9d9d9;padding:0 0 1px 2.6px;"></div><div class="cell" style="left:397px;top:19px;width:112px;height:62px;background:#fff;border-right:1px solid #333;border-bottom:1px solid #333;padding:0 0 1px 2.6px;"></div><div class="cell" style="left:509px;top:19px;width:97px;height:62px;background:#fff;border-right:1px solid #333;border-bottom:1px solid #333;padding:0 0 1px 2.6px;">语文</div><div class="cell" style="left:606px;top:19px;width:97px;height:62px;background:#fff;border-right:1px solid #333;border-bottom:1px solid #333;padding:0 0 1px 2.6px;">数学</div><div class="cell" style="left:703px;top:19px;width:75px;height:62px;background:#fff;border-right:1px solid #333;border-bottom:1px solid #d9d9d9;padding:0 0 1px 2.6px;"></div><div class="cell" style="left:778px;top:19px;width:108px;height:62px;background:#92d050;border-right:1px solid #333;border-bottom:1px solid #333;padding:0 0 1px 2.6px;"></div><div class="cell" style="left:886px;top:19px;width:107px;height:62px;background:#92d050;border-right:1px solid #333;border-bottom:1px solid #333;padding:0 0 1px 2.6px;">语文</div><div class="cell" style="left:993px;top:19px;width:107px;height:62px;background:#92d050;border-right:1px solid #333;border-bottom:1px solid #333;padding:0 0 1px 2.6px;">数学</div><div class="cell" style="left:1100px;top:19px;width:76px;height:62px;background:#fff;border-right:1px solid #d9d9d9;border-bottom:1px solid #d9d9d9;padding:0 0 1px 2.6px;"></div><div class="cell" style="left:1176px;top:19px;width:5px;height:62px;background:#fff;border-right:1px solid #d9d9d9;border-bottom:1px solid #d9d9d9;padding:0 0 1px 2.6px;"></div><div class="cell" style="left:30px;top:81px;width:124px;height:30px;background:#fff;border-right:1px solid #333;border-bottom:1px solid #333;padding:0 0 1px 2.6px;">张三</div><div class="cell num" style="left:154px;top:81px;width:84px;height:30px;background:#fff;border-right:1px solid #333;border-bottom:1px solid #333;padding:2.4px 2.3px 0 2.6px;"><span class="n">33</span></div><div class="cell num" style="left:238px;top:81px;width:84px;height:30px;background:#fff;border-right:1px solid #333;border-bottom:1px solid #333;padding:2.4px 2.3px 0 2.6px;"><span class="n">33</span></div><div class="cell" style="left:322px;top:81px;width:75px;height:30px;background:#fff;border-right:1px solid #333;border-bottom:1px solid #d9d9d9;padding:0 0 1px 2.6px;"></div><div class="cell" style="left:397px;top:81px;width:112px;height:30px;background:#fff;border-right:1px solid #333;border-bottom:1px solid #333;padding:0 0 1px 2.6px;">张三</div><div class="cell num" style="left:509px;top:81px;width:97px;height:30px;background:#fff;border-right:1px solid #333;border-bottom:1px solid #333;padding:2.4px 2.3px 0 2.6px;"><span class="n">33</span></div><div class="cell num" style="left:606px;top:81px;width:97px;height:30px;background:#fff;border-right:1px solid #333;border-bottom:1px solid #333;padding:2.4px 2.3px 0 2.6px;"><span class="n">33</span></div><div class="cell" style="left:703px;top:81px;width:75px;height:30px;background:#fff;border-right:1px solid #333;border-bottom:1px solid #d9d9d9;padding:0 0 1px 2.6px;"></div><div class="cell" style="left:778px;top:81px;width:108px;height:30px;background:#9dc3e6;border-right:1px solid #333;border-bottom:1px solid #333;padding:0 0 1px 2.6px;">张三</div><div class="cell num" style="left:886px;top:81px;width:107px;height:30px;background:#fff;border-right:1px solid #333;border-bottom:1px solid #333;padding:2.4px 2.3px 0 2.6px;"><span class="n">33</span></div><div class="cell num" style="left:993px;top:81px;width:107px;height:30px;background:#fff;border-right:1px solid #333;border-bottom:1px solid #333;padding:2.4px 2.3px 0 2.6px;"><span class="n">33</span></div><div class="cell" style="left:1100px;top:81px;width:76px;height:30px;background:#fff;border-right:1px solid #d9d9d9;border-bottom:1px solid #d9d9d9;padding:0 0 1px 2.6px;"></div><div class="cell" style="left:1176px;top:81px;width:5px;height:30px;background:#fff;border-right:1px solid #d9d9d9;border-bottom:1px solid #d9d9d9;padding:0 0 1px 2.6px;"></div><div class="cell" style="left:30px;top:111px;width:124px;height:30px;background:#fff;border-right:1px solid #333;border-bottom:1px solid #333;padding:0 0 1px 2.6px;">李四</div><div class="cell num" style="left:154px;top:111px;width:84px;height:30px;background:#fff;border-right:1px solid #333;border-bottom:1px solid #333;padding:2.4px 2.3px 0 2.6px;"><span class="n">78</span></div><div class="cell num" style="left:238px;top:111px;width:84px;height:30px;background:#fff;border-right:1px solid #333;border-bottom:1px solid #333;padding:2.4px 2.3px 0 2.6px;"><span class="n">78</span></div><div class="cell" style="left:322px;top:111px;width:75px;height:30px;background:#fff;border-right:1px solid #333;border-bottom:1px solid #d9d9d9;padding:0 0 1px 2.6px;"></div><div class="cell" style="left:397px;top:111px;width:112px;height:30px;background:#fff;border-right:1px solid #333;border-bottom:1px solid #333;padding:0 0 1px 2.6px;">李四</div><div class="cell num" style="left:509px;top:111px;width:97px;height:30px;background:#fff;border-right:1px solid #333;border-bottom:1px solid #333;padding:2.4px 2.3px 0 2.6px;"><span class="n">78</span></div><div class="cell num" style="left:606px;top:111px;width:97px;height:30px;background:#fff;border-right:1px solid #333;border-bottom:1px solid #333;padding:2.4px 2.3px 0 2.6px;"><span class="n">78</span></div><div class="cell" style="left:703px;top:111px;width:75px;height:30px;background:#fff;border-right:1px solid #333;border-bottom:1px solid #d9d9d9;padding:0 0 1px 2.6px;"></div><div class="cell" style="left:778px;top:111px;width:108px;height:30px;background:#9dc3e6;border-right:1px solid #333;border-bottom:1px solid #333;padding:0 0 1px 2.6px;">李四</div><div class="cell num" style="left:886px;top:111px;width:107px;height:30px;background:#fff;border-right:1px solid #333;border-bottom:1px solid #333;padding:2.4px 2.3px 0 2.6px;"><span class="n">78</span></div><div class="cell num" style="left:993px;top:111px;width:107px;height:30px;background:#fff;border-right:1px solid #333;border-bottom:1px solid #333;padding:2.4px 2.3px 0 2.6px;"><span class="n">78</span></div><div class="cell" style="left:1100px;top:111px;width:76px;height:30px;background:#fff;border-right:1px solid #d9d9d9;border-bottom:1px solid #d9d9d9;padding:0 0 1px 2.6px;"></div><div class="cell" style="left:1176px;top:111px;width:5px;height:30px;background:#fff;border-right:1px solid #d9d9d9;border-bottom:1px solid #d9d9d9;padding:0 0 1px 2.6px;"></div><div class="cell" style="left:30px;top:141px;width:124px;height:30px;background:#fff;border-right:1px solid #333;border-bottom:1px solid #333;padding:0 0 1px 2.6px;">曹操</div><div class="cell num" style="left:154px;top:141px;width:84px;height:30px;background:#fff;border-right:1px solid #333;border-bottom:1px solid #333;padding:2.4px 2.3px 0 2.6px;"><span class="n">98</span></div><div class="cell num" style="left:238px;top:141px;width:84px;height:30px;background:#fff;border-right:1px solid #333;border-bottom:1px solid #333;padding:2.4px 2.3px 0 2.6px;"><span class="n">98</span></div><div class="cell" style="left:322px;top:141px;width:75px;height:30px;background:#fff;border-right:1px solid #333;border-bottom:1px solid #d9d9d9;padding:0 0 1px 2.6px;"></div><div class="cell" style="left:397px;top:141px;width:112px;height:30px;background:#fff;border-right:1px solid #333;border-bottom:1px solid #333;padding:0 0 1px 2.6px;">曹操</div><div class="cell num" style="left:509px;top:141px;width:97px;height:30px;background:#fff;border-right:1px solid #333;border-bottom:1px solid #333;padding:2.4px 2.3px 0 2.6px;"><span class="n">98</span></div><div class="cell num" style="left:606px;top:141px;width:97px;height:30px;background:#fff;border-right:1px solid #333;border-bottom:1px solid #333;padding:2.4px 2.3px 0 2.6px;"><span class="n">98</span></div><div class="cell" style="left:703px;top:141px;width:75px;height:30px;background:#fff;border-right:1px solid #333;border-bottom:1px solid #d9d9d9;padding:0 0 1px 2.6px;"></div><div class="cell" style="left:778px;top:141px;width:108px;height:30px;background:#9dc3e6;border-right:1px solid #333;border-bottom:1px solid #333;padding:0 0 1px 2.6px;">曹操</div><div class="cell num" style="left:886px;top:141px;width:107px;height:30px;background:#fff;border-right:1px solid #333;border-bottom:1px solid #333;padding:2.4px 2.3px 0 2.6px;"><span class="n">98</span></div><div class="cell num" style="left:993px;top:141px;width:107px;height:30px;background:#fff;border-right:1px solid #333;border-bottom:1px solid #333;padding:2.4px 2.3px 0 2.6px;"><span class="n">98</span></div><div class="cell" style="left:1100px;top:141px;width:76px;height:30px;background:#fff;border-right:1px solid #d9d9d9;border-bottom:1px solid #d9d9d9;padding:0 0 1px 2.6px;"></div><div class="cell" style="left:1176px;top:141px;width:5px;height:30px;background:#fff;border-right:1px solid #d9d9d9;border-bottom:1px solid #d9d9d9;padding:0 0 1px 2.6px;"></div><div class="cell" style="left:30px;top:171px;width:124px;height:30px;background:#fff;border-right:1px solid #333;border-bottom:1px solid #333;padding:0 0 1px 2.6px;">吕布</div><div class="cell num" style="left:154px;top:171px;width:84px;height:30px;background:#fff;border-right:1px solid #333;border-bottom:1px solid #333;padding:2.4px 2.3px 0 2.6px;"><span class="n">89</span></div><div class="cell num" style="left:238px;top:171px;width:84px;height:30px;background:#fff;border-right:1px solid #333;border-bottom:1px solid #333;padding:2.4px 2.3px 0 2.6px;"><span class="n">89</span></div><div class="cell" style="left:322px;top:171px;width:75px;height:30px;background:#fff;border-right:1px solid #333;border-bottom:1px solid #d9d9d9;padding:0 0 1px 2.6px;"></div><div class="cell" style="left:397px;top:171px;width:112px;height:30px;background:#fff;border-right:1px solid #333;border-bottom:1px solid #333;padding:0 0 1px 2.6px;">吕布</div><div class="cell num" style="left:509px;top:171px;width:97px;height:30px;background:#fff;border-right:1px solid #333;border-bottom:1px solid #333;padding:2.4px 2.3px 0 2.6px;"><span class="n">89</span></div><div class="cell num" style="left:606px;top:171px;width:97px;height:30px;background:#fff;border-right:1px solid #333;border-bottom:1px solid #333;padding:2.4px 2.3px 0 2.6px;"><span class="n">89</span></div><div class="cell" style="left:703px;top:171px;width:75px;height:30px;background:#fff;border-right:1px solid #333;border-bottom:1px solid #d9d9d9;padding:0 0 1px 2.6px;"></div><div class="cell" style="left:778px;top:171px;width:108px;height:30px;background:#9dc3e6;border-right:1px solid #333;border-bottom:1px solid #333;padding:0 0 1px 2.6px;">吕布</div><div class="cell num" style="left:886px;top:171px;width:107px;height:30px;background:#fff;border-right:1px solid #333;border-bottom:1px solid #333;padding:2.4px 2.3px 0 2.6px;"><span class="n">89</span></div><div class="cell num" style="left:993px;top:171px;width:107px;height:30px;background:#fff;border-right:1px solid #333;border-bottom:1px solid #333;padding:2.4px 2.3px 0 2.6px;"><span class="n">89</span></div><div class="cell" style="left:1100px;top:171px;width:76px;height:30px;background:#fff;border-right:1px solid #d9d9d9;border-bottom:1px solid #d9d9d9;padding:0 0 1px 2.6px;"></div><div class="cell" style="left:1176px;top:171px;width:5px;height:30px;background:#fff;border-right:1px solid #d9d9d9;border-bottom:1px solid #d9d9d9;padding:0 0 1px 2.6px;"></div><div class="cell" style="left:30px;top:201px;width:124px;height:30px;background:#fff;border-right:1px solid #333;border-bottom:1px solid #333;padding:0 0 1px 2.6px;">乐乐</div><div class="cell num" style="left:154px;top:201px;width:84px;height:30px;background:#fff;border-right:1px solid #333;border-bottom:1px solid #333;padding:2.4px 2.3px 0 2.6px;"><span class="n">100</span></div><div class="cell num" style="left:238px;top:201px;width:84px;height:30px;background:#fff;border-right:1px solid #333;border-bottom:1px solid #333;padding:2.4px 2.3px 0 2.6px;"><span class="n">100</span></div><div class="cell" style="left:322px;top:201px;width:75px;height:30px;background:#fff;border-right:1px solid #333;border-bottom:1px solid #d9d9d9;padding:0 0 1px 2.6px;"></div><div class="cell" style="left:397px;top:201px;width:112px;height:30px;background:#fff;border-right:1px solid #333;border-bottom:1px solid #333;padding:0 0 1px 2.6px;">乐乐</div><div class="cell num" style="left:509px;top:201px;width:97px;height:30px;background:#fff;border-right:1px solid #333;border-bottom:1px solid #333;padding:2.4px 2.3px 0 2.6px;"><span class="n">100</span></div><div class="cell num" style="left:606px;top:201px;width:97px;height:30px;background:#fff;border-right:1px solid #333;border-bottom:1px solid #333;padding:2.4px 2.3px 0 2.6px;"><span class="n">100</span></div><div class="cell" style="left:703px;top:201px;width:75px;height:30px;background:#fff;border-right:1px solid #333;border-bottom:1px solid #d9d9d9;padding:0 0 1px 2.6px;"></div><div class="cell" style="left:778px;top:201px;width:108px;height:30px;background:#9dc3e6;border-right:1px solid #333;border-bottom:1px solid #333;padding:0 0 1px 2.6px;">乐乐</div><div class="cell num" style="left:886px;top:201px;width:107px;height:30px;background:#fff;border-right:1px solid #333;border-bottom:1px solid #333;padding:2.4px 2.3px 0 2.6px;"><span class="n">100</span></div><div class="cell num" style="left:993px;top:201px;width:107px;height:30px;background:#fff;border-right:1px solid #333;border-bottom:1px solid #333;padding:2.4px 2.3px 0 2.6px;"><span class="n">100</span></div><div class="cell" style="left:1100px;top:201px;width:76px;height:30px;background:#fff;border-right:1px solid #d9d9d9;border-bottom:1px solid #d9d9d9;padding:0 0 1px 2.6px;"></div><div class="cell" style="left:1176px;top:201px;width:5px;height:30px;background:#fff;border-right:1px solid #d9d9d9;border-bottom:1px solid #d9d9d9;padding:0 0 1px 2.6px;"></div><div class="cell" style="left:30px;top:231px;width:124px;height:30px;background:#fff;border-right:1px solid #333;border-bottom:1px solid #333;padding:0 0 1px 2.6px;">朵朵</div><div class="cell num" style="left:154px;top:231px;width:84px;height:30px;background:#fff;border-right:1px solid #333;border-bottom:1px solid #333;padding:2.4px 2.3px 0 2.6px;"><span class="n">23</span></div><div class="cell num" style="left:238px;top:231px;width:84px;height:30px;background:#fff;border-right:1px solid #333;border-bottom:1px solid #333;padding:2.4px 2.3px 0 2.6px;"><span class="n">23</span></div><div class="cell" style="left:322px;top:231px;width:75px;height:30px;background:#fff;border-right:1px solid #333;border-bottom:1px solid #d9d9d9;padding:0 0 1px 2.6px;"></div><div class="cell" style="left:397px;top:231px;width:112px;height:30px;background:#fff;border-right:1px solid #333;border-bottom:1px solid #333;padding:0 0 1px 2.6px;">朵朵</div><div class="cell num" style="left:509px;top:231px;width:97px;height:30px;background:#fff;border-right:1px solid #333;border-bottom:1px solid #333;padding:2.4px 2.3px 0 2.6px;"><span class="n">23</span></div><div class="cell num" style="left:606px;top:231px;width:97px;height:30px;background:#fff;border-right:1px solid #333;border-bottom:1px solid #333;padding:2.4px 2.3px 0 2.6px;"><span class="n">23</span></div><div class="cell" style="left:703px;top:231px;width:75px;height:30px;background:#fff;border-right:1px solid #333;border-bottom:1px solid #d9d9d9;padding:0 0 1px 2.6px;"></div><div class="cell" style="left:778px;top:231px;width:108px;height:30px;background:#9dc3e6;border-right:1px solid #333;border-bottom:1px solid #333;padding:0 0 1px 2.6px;">朵朵</div><div class="cell num" style="left:886px;top:231px;width:107px;height:30px;background:#fff;border-right:1px solid #333;border-bottom:1px solid #333;padding:2.4px 2.3px 0 2.6px;"><span class="n">23</span></div><div class="cell num" style="left:993px;top:231px;width:107px;height:30px;background:#fff;border-right:1px solid #333;border-bottom:1px solid #333;padding:2.4px 2.3px 0 2.6px;"><span class="n">23</span></div><div class="cell" style="left:1100px;top:231px;width:76px;height:30px;background:#fff;border-right:1px solid #d9d9d9;border-bottom:1px solid #d9d9d9;padding:0 0 1px 2.6px;"></div><div class="cell" style="left:1176px;top:231px;width:5px;height:30px;background:#fff;border-right:1px solid #d9d9d9;border-bottom:1px solid #d9d9d9;padding:0 0 1px 2.6px;"></div><div class="cell" style="left:30px;top:261px;width:124px;height:30px;background:#fff;border-right:1px solid #333;border-bottom:1px solid #333;padding:0 0 1px 2.6px;">貂蝉</div><div class="cell num" style="left:154px;top:261px;width:84px;height:30px;background:#fff;border-right:1px solid #333;border-bottom:1px solid #333;padding:2.4px 2.3px 0 2.6px;"><span class="n">78</span></div><div class="cell num" style="left:238px;top:261px;width:84px;height:30px;background:#fff;border-right:1px solid #333;border-bottom:1px solid #333;padding:2.4px 2.3px 0 2.6px;"><span class="n">78</span></div><div class="cell" style="left:322px;top:261px;width:75px;height:30px;background:#fff;border-right:1px solid #333;border-bottom:1px solid #d9d9d9;padding:0 0 1px 2.6px;"></div><div class="cell" style="left:397px;top:261px;width:112px;height:30px;background:#fff;border-right:1px solid #333;border-bottom:1px solid #333;padding:0 0 1px 2.6px;">貂蝉</div><div class="cell num" style="left:509px;top:261px;width:97px;height:30px;background:#fff;border-right:1px solid #333;border-bottom:1px solid #333;padding:2.4px 2.3px 0 2.6px;"><span class="n">78</span></div><div class="cell num" style="left:606px;top:261px;width:97px;height:30px;background:#fff;border-right:1px solid #333;border-bottom:1px solid #333;padding:2.4px 2.3px 0 2.6px;"><span class="n">78</span></div><div class="cell" style="left:703px;top:261px;width:75px;height:30px;background:#fff;border-right:1px solid #333;border-bottom:1px solid #d9d9d9;padding:0 0 1px 2.6px;"></div><div class="cell" style="left:778px;top:261px;width:108px;height:30px;background:#9dc3e6;border-right:1px solid #333;border-bottom:1px solid #333;padding:0 0 1px 2.6px;">貂蝉</div><div class="cell num" style="left:886px;top:261px;width:107px;height:30px;background:#fff;border-right:1px solid #333;border-bottom:1px solid #333;padding:2.4px 2.3px 0 2.6px;"><span class="n">78</span></div><div class="cell num" style="left:993px;top:261px;width:107px;height:30px;background:#fff;border-right:1px solid #333;border-bottom:1px solid #333;padding:2.4px 2.3px 0 2.6px;"><span class="n">78</span></div><div class="cell" style="left:1100px;top:261px;width:76px;height:30px;background:#fff;border-right:1px solid #d9d9d9;border-bottom:1px solid #d9d9d9;padding:0 0 1px 2.6px;"></div><div class="cell" style="left:1176px;top:261px;width:5px;height:30px;background:#fff;border-right:1px solid #d9d9d9;border-bottom:1px solid #d9d9d9;padding:0 0 1px 2.6px;"></div><div class="cell" style="left:30px;top:291px;width:124px;height:30px;background:#fff;border-right:1px solid #333;border-bottom:1px solid #333;padding:0 0 1px 2.6px;">张了</div><div class="cell num" style="left:154px;top:291px;width:84px;height:30px;background:#fff;border-right:1px solid #333;border-bottom:1px solid #333;padding:2.4px 2.3px 0 2.6px;"><span class="n">90</span></div><div class="cell num" style="left:238px;top:291px;width:84px;height:30px;background:#fff;border-right:1px solid #333;border-bottom:1px solid #333;padding:2.4px 2.3px 0 2.6px;"><span class="n">90</span></div><div class="cell" style="left:322px;top:291px;width:75px;height:30px;background:#fff;border-right:1px solid #333;border-bottom:1px solid #d9d9d9;padding:0 0 1px 2.6px;"></div><div class="cell" style="left:397px;top:291px;width:112px;height:30px;background:#fff;border-right:1px solid #333;border-bottom:1px solid #333;padding:0 0 1px 2.6px;">张了</div><div class="cell num" style="left:509px;top:291px;width:97px;height:30px;background:#fff;border-right:1px solid #333;border-bottom:1px solid #333;padding:2.4px 2.3px 0 2.6px;"><span class="n">90</span></div><div class="cell num" style="left:606px;top:291px;width:97px;height:30px;background:#fff;border-right:1px solid #333;border-bottom:1px solid #333;padding:2.4px 2.3px 0 2.6px;"><span class="n">90</span></div><div class="cell" style="left:703px;top:291px;width:75px;height:30px;background:#fff;border-right:1px solid #333;border-bottom:1px solid #d9d9d9;padding:0 0 1px 2.6px;"></div><div class="cell" style="left:778px;top:291px;width:108px;height:30px;background:#9dc3e6;border-right:1px solid #333;border-bottom:1px solid #333;padding:0 0 1px 2.6px;">张了</div><div class="cell num" style="left:886px;top:291px;width:107px;height:30px;background:#fff;border-right:1px solid #333;border-bottom:1px solid #333;padding:2.4px 2.3px 0 2.6px;"><span class="n">90</span></div><div class="cell num" style="left:993px;top:291px;width:107px;height:30px;background:#fff;border-right:1px solid #333;border-bottom:1px solid #333;padding:2.4px 2.3px 0 2.6px;"><span class="n">90</span></div><div class="cell" style="left:1100px;top:291px;width:76px;height:30px;background:#fff;border-right:1px solid #d9d9d9;border-bottom:1px solid #d9d9d9;padding:0 0 1px 2.6px;"></div><div class="cell" style="left:1176px;top:291px;width:5px;height:30px;background:#fff;border-right:1px solid #d9d9d9;border-bottom:1px solid #d9d9d9;padding:0 0 1px 2.6px;"></div><div class="cell" style="left:30px;top:321px;width:124px;height:30px;background:#fff;border-right:1px solid #333;border-bottom:1px solid #333;padding:0 0 1px 2.6px;">依依</div><div class="cell num" style="left:154px;top:321px;width:84px;height:30px;background:#fff;border-right:1px solid #333;border-bottom:1px solid #333;padding:2.4px 2.3px 0 2.6px;"><span class="n">89</span></div><div class="cell num" style="left:238px;top:321px;width:84px;height:30px;background:#fff;border-right:1px solid #333;border-bottom:1px solid #333;padding:2.4px 2.3px 0 2.6px;"><span class="n">89</span></div><div class="cell" style="left:322px;top:321px;width:75px;height:30px;background:#fff;border-right:1px solid #333;border-bottom:1px solid #d9d9d9;padding:0 0 1px 2.6px;"></div><div class="cell" style="left:397px;top:321px;width:112px;height:30px;background:#fff;border-right:1px solid #333;border-bottom:1px solid #333;padding:0 0 1px 2.6px;">依依</div><div class="cell num" style="left:509px;top:321px;width:97px;height:30px;background:#fff;border-right:1px solid #333;border-bottom:1px solid #333;padding:2.4px 2.3px 0 2.6px;"><span class="n">89</span></div><div class="cell num" style="left:606px;top:321px;width:97px;height:30px;background:#fff;border-right:1px solid #333;border-bottom:1px solid #333;padding:2.4px 2.3px 0 2.6px;"><span class="n">89</span></div><div class="cell" style="left:703px;top:321px;width:75px;height:30px;background:#fff;border-right:1px solid #333;border-bottom:1px solid #d9d9d9;padding:0 0 1px 2.6px;"></div><div class="cell" style="left:778px;top:321px;width:108px;height:30px;background:#9dc3e6;border-right:1px solid #333;border-bottom:1px solid #333;padding:0 0 1px 2.6px;">依依</div><div class="cell num" style="left:886px;top:321px;width:107px;height:30px;background:#fff;border-right:1px solid #333;border-bottom:1px solid #333;padding:2.4px 2.3px 0 2.6px;"><span class="n">89</span></div><div class="cell num" style="left:993px;top:321px;width:107px;height:30px;background:#fff;border-right:1px solid #333;border-bottom:1px solid #333;padding:2.4px 2.3px 0 2.6px;"><span class="n">89</span></div><div class="cell" style="left:1100px;top:321px;width:76px;height:30px;background:#fff;border-right:1px solid #d9d9d9;border-bottom:1px solid #d9d9d9;padding:0 0 1px 2.6px;"></div><div class="cell" style="left:1176px;top:321px;width:5px;height:30px;background:#fff;border-right:1px solid #d9d9d9;border-bottom:1px solid #d9d9d9;padding:0 0 1px 2.6px;"></div><div class="cell" style="left:30px;top:351px;width:124px;height:30px;background:#fff;border-right:1px solid #333;border-bottom:1px solid #333;padding:0 0 1px 2.6px;">然然</div><div class="cell num" style="left:154px;top:351px;width:84px;height:30px;background:#fff;border-right:1px solid #333;border-bottom:1px solid #333;padding:2.4px 2.3px 0 2.6px;"><span class="n">98</span></div><div class="cell num" style="left:238px;top:351px;width:84px;height:30px;background:#fff;border-right:1px solid #333;border-bottom:1px solid #333;padding:2.4px 2.3px 0 2.6px;"><span class="n">98</span></div><div class="cell" style="left:322px;top:351px;width:75px;height:30px;background:#fff;border-right:1px solid #333;border-bottom:1px solid #d9d9d9;padding:0 0 1px 2.6px;"></div><div class="cell" style="left:397px;top:351px;width:112px;height:30px;background:#fff;border-right:1px solid #333;border-bottom:1px solid #333;padding:0 0 1px 2.6px;">然然</div><div class="cell num" style="left:509px;top:351px;width:97px;height:30px;background:#fff;border-right:1px solid #333;border-bottom:1px solid #333;padding:2.4px 2.3px 0 2.6px;"><span class="n">98</span></div><div class="cell num" style="left:606px;top:351px;width:97px;height:30px;background:#fff;border-right:1px solid #333;border-bottom:1px solid #333;padding:2.4px 2.3px 0 2.6px;"><span class="n">98</span></div><div class="cell" style="left:703px;top:351px;width:75px;height:30px;background:#fff;border-right:1px solid #333;border-bottom:1px solid #d9d9d9;padding:0 0 1px 2.6px;"></div><div class="cell" style="left:778px;top:351px;width:108px;height:30px;background:#9dc3e6;border-right:1px solid #333;border-bottom:1px solid #333;padding:0 0 1px 2.6px;">然然</div><div class="cell num" style="left:886px;top:351px;width:107px;height:30px;background:#fff;border-right:1px solid #333;border-bottom:1px solid #333;padding:2.4px 2.3px 0 2.6px;"><span class="n">98</span></div><div class="cell num" style="left:993px;top:351px;width:107px;height:30px;background:#fff;border-right:1px solid #333;border-bottom:1px solid #333;padding:2.4px 2.3px 0 2.6px;"><span class="n">98</span></div><div class="cell" style="left:1100px;top:351px;width:76px;height:30px;background:#fff;border-right:1px solid #d9d9d9;border-bottom:1px solid #d9d9d9;padding:0 0 1px 2.6px;"></div><div class="cell" style="left:1176px;top:351px;width:5px;height:30px;background:#fff;border-right:1px solid #d9d9d9;border-bottom:1px solid #d9d9d9;padding:0 0 1px 2.6px;"></div><div class="cell" style="left:30px;top:381px;width:124px;height:30px;background:#fff;border-right:1px solid #333;border-bottom:1px solid #333;padding:0 0 1px 2.6px;">浩浩</div><div class="cell num" style="left:154px;top:381px;width:84px;height:30px;background:#fff;border-right:1px solid #333;border-bottom:1px solid #333;padding:2.4px 2.3px 0 2.6px;"><span class="n">90</span></div><div class="cell num" style="left:238px;top:381px;width:84px;height:30px;background:#fff;border-right:1px solid #333;border-bottom:1px solid #333;padding:2.4px 2.3px 0 2.6px;"><span class="n">90</span></div><div class="cell" style="left:322px;top:381px;width:75px;height:30px;background:#fff;border-right:1px solid #333;border-bottom:1px solid #d9d9d9;padding:0 0 1px 2.6px;"></div><div class="cell" style="left:397px;top:381px;width:112px;height:30px;background:#fff;border-right:1px solid #333;border-bottom:1px solid #333;padding:0 0 1px 2.6px;">浩浩</div><div class="cell num" style="left:509px;top:381px;width:97px;height:30px;background:#fff;border-right:1px solid #333;border-bottom:1px solid #333;padding:2.4px 2.3px 0 2.6px;"><span class="n">90</span></div><div class="cell num" style="left:606px;top:381px;width:97px;height:30px;background:#fff;border-right:1px solid #333;border-bottom:1px solid #333;padding:2.4px 2.3px 0 2.6px;"><span class="n">90</span></div><div class="cell" style="left:703px;top:381px;width:75px;height:30px;background:#fff;border-right:1px solid #333;border-bottom:1px solid #d9d9d9;padding:0 0 1px 2.6px;"></div><div class="cell" style="left:778px;top:381px;width:108px;height:30px;background:#9dc3e6;border-right:1px solid #333;border-bottom:1px solid #333;padding:0 0 1px 2.6px;">浩浩</div><div class="cell num" style="left:886px;top:381px;width:107px;height:30px;background:#fff;border-right:1px solid #333;border-bottom:1px solid #333;padding:2.4px 2.3px 0 2.6px;"><span class="n">90</span></div><div class="cell num" style="left:993px;top:381px;width:107px;height:30px;background:#fff;border-right:1px solid #333;border-bottom:1px solid #333;padding:2.4px 2.3px 0 2.6px;"><span class="n">90</span></div><div class="cell" style="left:1100px;top:381px;width:76px;height:30px;background:#fff;border-right:1px solid #d9d9d9;border-bottom:1px solid #d9d9d9;padding:0 0 1px 2.6px;"></div><div class="cell" style="left:1176px;top:381px;width:5px;height:30px;background:#fff;border-right:1px solid #d9d9d9;border-bottom:1px solid #d9d9d9;padding:0 0 1px 2.6px;"></div><svg class="i" style="left:30.00px;top:19.00px;" width="124" height="62" viewBox="0 0 124 62"><path d="M0 0 L123.5 61.5" stroke="#ff4b4b" stroke-width="1.1"/></svg><span class="t " style="left:111.41px;top:33.95px;font-size:14.67px;color:#1a1a1a;font-weight:400;">分数</span><span class="t " style="left:32.31px;top:53.05px;font-size:14.67px;color:#1a1a1a;font-weight:400;">姓名</span><svg class="i" style="left:397.00px;top:19.00px;" width="112" height="62" viewBox="0 0 112 62"><path d="M0.5 0.5 L111.5 61.5" stroke="#ed7d31" stroke-width="1.9"/></svg><span class="t " style="left:463.91px;top:33.65px;font-size:14.67px;color:#1a1a1a;font-weight:400;">分数</span><span class="t " style="left:398.71px;top:53.05px;font-size:14.67px;color:#1a1a1a;font-weight:400;">姓名</span><svg class="i" style="left:778.00px;top:19.00px;" width="108" height="62" viewBox="0 0 108 62"><path d="M0.6 0.4 L106.6 61.2 H0.6 Z" fill="#9dc3e6" stroke="#2f528f" stroke-width="1.1" stroke-linejoin="round"/></svg><span class="t " style="left:836.16px;top:31.72px;font-size:13.4px;color:#1a1a1a;font-weight:400;">分数</span><span class="t " style="left:786.46px;top:60.92px;font-size:13.4px;color:#1a1a1a;font-weight:400;">姓名</span><div class="b " style="left:1099.00px;top:79.00px;width:78.00px;height:32.00px;border:2px solid #217346;"></div><div class="b " style="left:1171.50px;top:106.50px;width:6.00px;height:6.00px;background:#217346;border:1px solid #fff;"></div><div class="b " style="left:1180.00px;top:0.00px;width:2.00px;height:402.00px;background:#cfcfcf;"></div></div><div id="vscroll" style="position:absolute;left:1182px;top:194px;width:18px;height:402px;"><div class="b " style="left:0.00px;top:0.00px;width:18.00px;height:402.00px;background:#e6e6e6;"></div><div class="b " style="left:0.60px;top:16.00px;width:15.60px;height:372.00px;background:#d9d9d9;"></div><div class="b " style="left:0.60px;top:0.20px;width:15.60px;height:15.00px;background:#fff;border:1px solid #cdcdcd;"><svg class="i" style="left:4.00px;top:5.00px;" width="7" height="4" viewBox="0 0 7 4"><path d="M0 3.6 H7 L3.5 0 Z" fill="#606060"/></svg></div><div class="b " style="left:0.60px;top:15.20px;width:15.60px;height:261.30px;background:#fff;border:1px solid #c6c6c6;"></div><div class="b " style="left:0.60px;top:388.50px;width:15.60px;height:13.50px;background:#fff;border:1px solid #cdcdcd;"><svg class="i" style="left:3.60px;top:4.20px;" width="7" height="4" viewBox="0 0 7 4"><path d="M0 0 H7 L3.5 3.6 Z" fill="#606060"/></svg></div></div><div class="b " style="left:763.40px;top:187.40px;width:355.80px;height:408.60px;border:2px solid #f8262c;"></div><div id="sheettabs" class="sec" style="top:596px;height:21px;background:#e6e6e6;"><div class="b " style="left:0.00px;top:0.00px;width:1200.00px;height:1.00px;background:#cdcdcd;"></div><svg class="i" style="left:18.00px;top:7.80px;" width="5" height="6.4" viewBox="0 0 5 6.4"><path d="M4.6 0 V6.2 L0 3.1 Z" fill="#c6c6c6"/></svg><svg class="i" style="left:39.00px;top:7.80px;" width="5" height="6.4" viewBox="0 0 5 6.4"><path d="M0 0 V6.2 L4.6 3.1 Z" fill="#c6c6c6"/></svg><div class="b " style="left:72.00px;top:3.00px;width:1.00px;height:15.50px;background:#ababab;"></div><span class="t " style="left:80.40px;top:3.08px;font-size:12.55px;color:#444;font-weight:400;">Sheet1</span><div class="b " style="left:130.40px;top:0.00px;width:57.00px;height:19.20px;background:#fff;border-bottom:1.4px solid #217346;"><span class="t " style="left:8.40px;top:2.99px;font-size:12.65px;color:#217346;font-weight:400;text-shadow:0 0 0.4px #217346;">Sheet2</span></div><svg class="i" style="left:211.80px;top:3.70px;" width="14" height="14" viewBox="0 0 14 14"><circle cx="7" cy="7" r="6.3" fill="none" stroke="#777" stroke-width="1"/><path d="M3.8 7 H10.2 M7 3.8 V10.2" stroke="#777" stroke-width="1"/></svg><div class="b " style="left:716.80px;top:7.40px;width:1.40px;height:1.40px;background:#9a9a9a;"></div><div class="b " style="left:716.80px;top:10.80px;width:1.40px;height:1.40px;background:#9a9a9a;"></div><div class="b " style="left:716.80px;top:14.20px;width:1.40px;height:1.40px;background:#9a9a9a;"></div><div class="b " style="left:745.00px;top:3.00px;width:420.50px;height:15.40px;background:#d9d9d9;"></div><div class="b " style="left:729.00px;top:3.00px;width:15.60px;height:15.40px;background:#fff;border:1px solid #cdcdcd;"><svg class="i" style="left:5.00px;top:3.40px;" width="4.4" height="7" viewBox="0 0 4.4 7"><path d="M4 0 V6.8 L0.2 3.4 Z" fill="#606060"/></svg></div><div class="b " style="left:744.60px;top:3.00px;width:385.00px;height:15.40px;background:#fff;border:1px solid #c6c6c6;"></div><div class="b " style="left:1165.50px;top:3.00px;width:15.00px;height:15.40px;background:#fff;border:1px solid #cdcdcd;"><svg class="i" style="left:5.00px;top:3.40px;" width="4.4" height="7" viewBox="0 0 4.4 7"><path d="M0.2 0 V6.8 L4 3.4 Z" fill="#606060"/></svg></div></div><div id="statusbar" class="sec" style="top:617px;height:21px;background:#f3f2f1;"><span class="t " style="left:6.55px;top:6.15px;font-size:11.3px;color:#555;font-weight:400;">就绪</span><svg class="i" style="left:46.20px;top:4.80px;" width="14.4" height="12.6" viewBox="0 0 14.4 12.6"><path d="M0.6 12 V0.6 H13.4 V4" fill="none" stroke="#555" stroke-width="1.1"/><path d="M0.6 3 H13.4" stroke="#555" stroke-width="1"/><path d="M2.6 5.6 H5 M2.6 7.8 H4.4 M2.6 10 H4.6" stroke="#555" stroke-width="1"/><circle cx="9.6" cy="8.4" r="3.8" fill="none" stroke="#555" stroke-width="1.1"/><circle cx="9.6" cy="8.4" r="1.6" fill="#555"/></svg><div class="b " style="left:917.00px;top:0.00px;width:36.00px;height:21.00px;background:#d2d0ce;"></div><svg class="i" style="left:928.00px;top:4.00px;" width="13" height="12" viewBox="0 0 13 12"><rect x="0.6" y="0.6" width="11.6" height="10.6" fill="none" stroke="#444" stroke-width="1.1"/><path d="M4.4 0.6 V11 M8.4 0.6 V11 M0.6 4.2 H12 M0.6 7.6 H12" stroke="#444" stroke-width="1"/></svg><svg class="i" style="left:965.60px;top:4.00px;" width="13" height="12" viewBox="0 0 13 12"><rect x="0.6" y="0.6" width="11.6" height="10.6" fill="none" stroke="#555" stroke-width="1.1"/><rect x="3" y="2.8" width="6.8" height="8.2" fill="none" stroke="#555" stroke-width="1"/><path d="M4.6 5 H8.2 M4.6 7 H8.2 M4.6 9 H8.2" stroke="#555" stroke-width="0.9"/></svg><svg class="i" style="left:1003.00px;top:4.00px;" width="13.4" height="12" viewBox="0 0 13.4 12"><path d="M0.6 0.6 H12.6 V11 H0.6 Z M4 0.6 V5.6 H8.6 V0.6 M0.6 5.6 H4" fill="none" stroke="#555" stroke-width="1.1"/></svg><div class="b " style="left:1033.80px;top:9.50px;width:6.80px;height:1.10px;background:#555;"></div><div class="b " style="left:1045.80px;top:9.50px;width:91.80px;height:1.00px;background:#8a8a8a;"></div><div class="b " style="left:1089.40px;top:4.80px;width:4.60px;height:10.00px;background:#666;"></div><svg class="i" style="left:1143.00px;top:6.60px;" width="7" height="7" viewBox="0 0 7 7"><path d="M0 3.4 H6.8 M3.4 0 V6.8" stroke="#555" stroke-width="1.1"/></svg><span class="t " style="left:1162.00px;top:4.04px;font-size:12px;color:#444;font-weight:400;">100%</span></div>
</div></body></html>
